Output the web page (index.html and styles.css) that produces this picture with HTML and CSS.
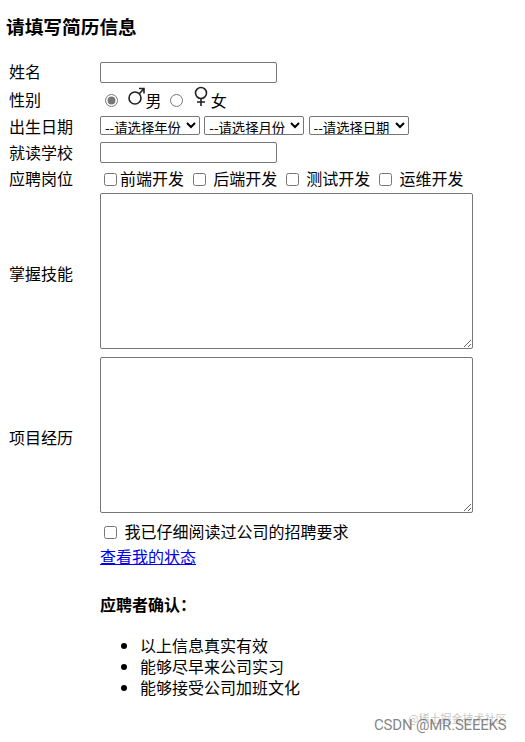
FILE: index.html
```html
<!DOCTYPE html>
<html>
<head>
    <meta name="viewport" content="width=device-width, initial-scale=1.0">
    <title>填写简历</title>
    <link rel="stylesheet" href="styles.css">
</head>
<body>
    <h3>请填写简历信息</h3>

    <table class="resume">
        <tr class="row-name">
            <td class="label">姓名</td>
            <td><input type="text" class="text-input"></td>
        </tr>
        <tr class="row-gender">
            <td class="label">性别</td>
            <td>
                <input type="radio" name="gender" class="radio" checked>
                <svg class="symbol" viewBox="0 0 18 20" aria-label="male">
                    <circle cx="8" cy="12" r="6"/>
                    <path d="M12.5 7.5 17 2.5M12 2.5h5v5"/>
                </svg>男
                <input type="radio" name="gender" class="radio">
                <svg class="symbol" viewBox="0 0 18 20" aria-label="female">
                    <circle cx="9" cy="7" r="5.5"/>
                    <path d="M9 12.5V20M5 16h8"/>
                </svg>女
            </td>
        </tr>
        <tr class="row-date">
            <td class="label">出生日期</td>
            <td class="dates">
                <select><option>--请选择年份</option></select>
                <select><option>--请选择月份</option></select>
                <select><option>--请选择日期</option></select>
            </td>
        </tr>
        <tr class="row-school">
            <td class="label">就读学校</td>
            <td><input type="text" class="text-input"></td>
        </tr>
        <tr class="row-job">
            <td class="label">应聘岗位</td>
            <td>
                <input type="checkbox" class="check first">前端开发
                <input type="checkbox" class="check"> 后端开发
                <input type="checkbox" class="check"> 测试开发
                <input type="checkbox" class="check"> 运维开发
            </td>
        </tr>
        <tr>
            <td class="label">掌握技能</td>
            <td><textarea></textarea></td>
        </tr>
        <tr>
            <td class="label">项目经历</td>
            <td><textarea></textarea></td>
        </tr>
        <tr class="row-agree">
            <td></td>
            <td><input type="checkbox" class="check agree"> 我已仔细阅读过公司的招聘要求</td>
        </tr>
        <tr class="row-link">
            <td></td>
            <td><a href="#">查看我的状态</a></td>
        </tr>
        <tr>
            <td></td>
            <td>
                <h4>应聘者确认：</h4>
                <ul>
                    <li>以上信息真实有效</li>
                    <li>能够尽早来公司实习</li>
                    <li>能够接受公司加班文化</li>
                </ul>
            </td>
        </tr>
    </table>

    <!-- watermarks -->
    <div class="mark-back">@稀土掘金技术社区</div>
    <div class="mark-front">CSDN @MR.SEEEKS</div>
</body>
</html>
```

FILE: styles.css
```css
body {
    margin: 0 6px;
    font-family: "Noto Sans CJK SC", "Liberation Sans", sans-serif;
    font-size: 16px;
    color: #000;
    background-color: #fff;
}

h3 {
    margin: 0;
    padding-top: 14px;
    height: 44px;
    font-size: 18.7px;
    line-height: 24px;
    font-weight: bold;
}

.resume {
    border-spacing: 2px;
    line-height: 20px;
}

.resume td {
    padding: 1px;
    vertical-align: middle;
}

.label {
    width: 87px;
}

.row-name td { height: 23px; }
.row-gender td { height: 23px; }
.row-date td { height: 22px; }
.row-school td { height: 22px; }
.row-job td { height: 22px; }
.row-agree td { height: 21px; }
.row-link td { height: 20px; }

/* labels sit a little above the middle of these two rows */
.row-name .label { height: 20px; padding-bottom: 4px; }
.row-gender .label { height: 21px; padding-bottom: 3px; }

.text-input {
    display: block;
    box-sizing: border-box;
    width: 177px;
    height: 21px;
    margin: 0;
    padding: 1px 2px;
    border: 1px solid #767676;
    border-radius: 2px;
}

.radio {
    width: 13px;
    height: 13px;
    margin: 3px 5px 0 5px;
    accent-color: #767676;
}

.symbol {
    width: 18px;
    height: 20px;
    margin-top: -8px;
    margin-right: 1px;
    vertical-align: 1px;
    fill: none;
    stroke: #222;
    stroke-width: 1.6;
}

.dates {
    white-space: nowrap;
}

select {
    width: 100px;
    height: 19px;
    margin: 0 0.7px 0 0;
    padding: 0;
    font-family: "Noto Sans CJK SC", "Liberation Sans", sans-serif;
    font-size: 13.33px;
    background-color: #fff;
    border: 1px solid #767676;
    border-radius: 2px;
}

.check {
    width: 13px;
    height: 13px;
    margin: 3px 4px 3px 5px;
    vertical-align: -1px;
}

.check.first {
    margin-left: 4px;
    margin-right: 3px;
}

.check.agree {
    margin-left: 4px;
}

textarea {
    display: block;
    box-sizing: border-box;
    width: 373px;
    height: 156px;
    margin: 0 0 4px;
    border: 1px solid #767676;
    border-radius: 2px;
}

a {
    color: #0000ee;
}

h4 {
    margin: 24px 0 0;
    font-size: 16px;
    line-height: 21px;
}

ul {
    margin: 20px 0 0;
    padding-left: 40px;
    line-height: 21px;
}

.mark-back {
    position: absolute;
    top: 709px;
    left: 408px;
    white-space: nowrap;
    font-size: 11px;
    line-height: 18px;
    color: rgba(120, 120, 120, 0.45);
}

.mark-front {
    position: absolute;
    top: 714px;
    left: 374px;
    white-space: nowrap;
    font-family: Roboto, "Liberation Sans", sans-serif;
    font-size: 15px;
    letter-spacing: -0.2px;
    line-height: 22px;
    color: rgba(90, 90, 90, 0.75);
}
```
